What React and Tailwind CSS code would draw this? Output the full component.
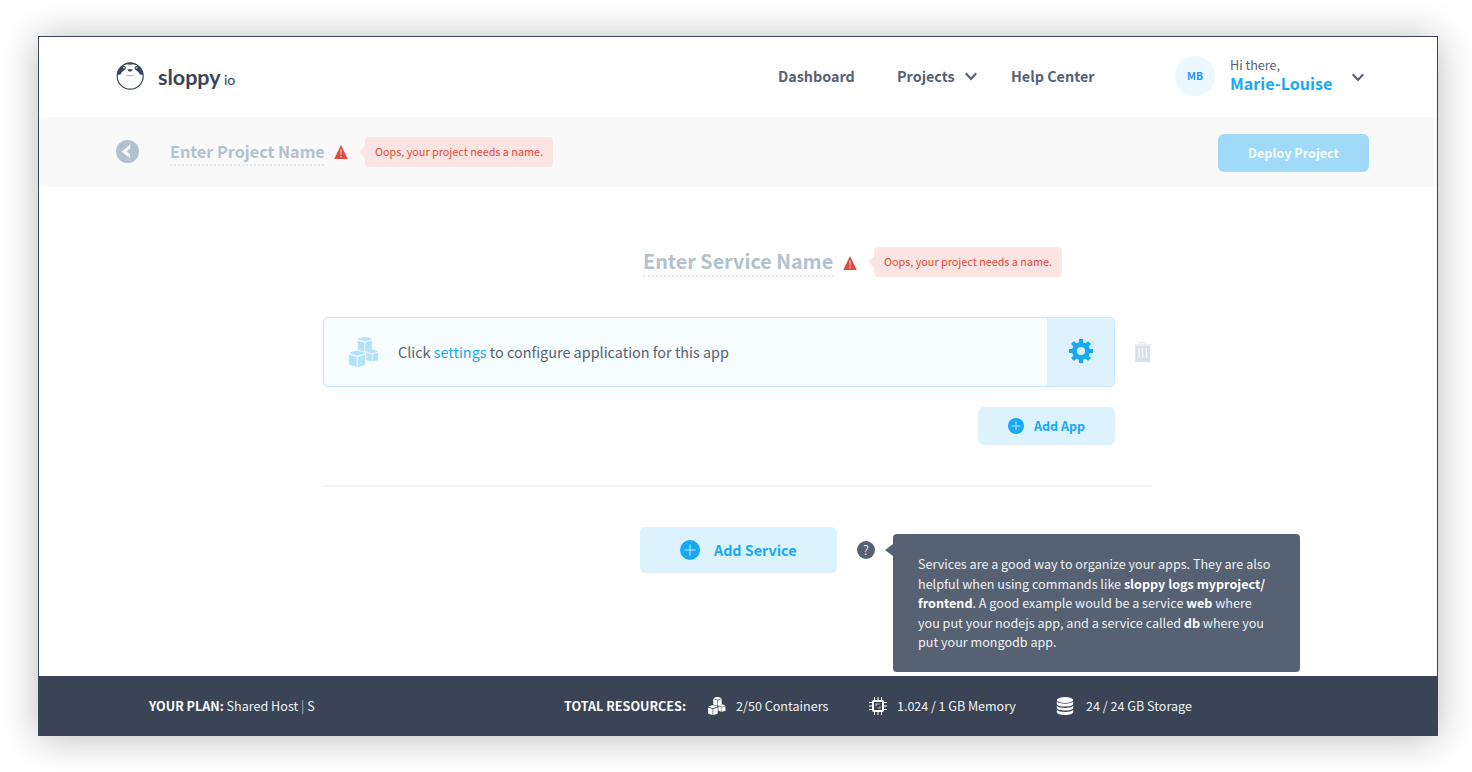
function Cube({ x, y, size, color }) {
  return (
    <g transform={`translate(${x} ${y}) scale(${size / 20})`} fill={color}>
      <path d="M10 0C12 0 16.5 1.2 18.8 2.6L19 3.4L10 6.4L1 3.4L1.2 2.6C3.5 1.2 8 0 10 0Z" />
      <path d="M.2 4.8L9.4 7.8V20L2 18C.8 17.6 .2 17 .2 16Z" />
      <path d="M19.8 4.8L10.6 7.8V20L18 18C19.2 17.6 19.8 17 19.8 16Z" />
    </g>
  );
}

function Cubes({ className, color }) {
  return (
    <svg className={className} viewBox="0 0 30 30">
      <Cube x={8.6} y={0} size={14.4} color={color} />
      <Cube x={0} y={13.6} size={16.4} color={color} />
      <Cube x={17.2} y={12.6} size={12} color={color} />
    </svg>
  );
}

function SlothLogo() {
  return (
    <svg className="h-7 w-7 shrink-0" viewBox="0 0 28 28" fill="#3a4456">
      <circle cx="14.2" cy="14.2" r="13" fill="none" stroke="#3a4456" strokeWidth="1.2" />
      <path d="M8.5 1.8C11.5 .1 16.9 .1 19.9 1.8C17.6 2.9 10.8 2.9 8.5 1.8Z" />
      <path d="M6.3 4.2C8.2 3.8 9.8 4.4 9.8 6C9.8 8.6 5.4 9 4.8 12.2C3.8 13 2 13 1.2 12.6C1.4 9 3.4 5.4 6.3 4.2Z" />
      <path d="M22.1 4.2C20.2 3.8 18.6 4.4 18.6 6C18.6 8.6 23 9 23.6 12.2C24.6 13 26.4 13 27.2 12.6C27 9 25 5.4 22.1 4.2Z" />
      <circle cx="7.8" cy="5.8" r="1" fill="#b9bec6" />
      <circle cx="20.6" cy="5.8" r="1" fill="#b9bec6" />
      <path d="M11.4 7.2H16.6C16.4 8.4 15 9.6 14 9.6C13 9.6 11.6 8.4 11.4 7.2Z" />
      <path d="M7.8 12.8C11 14 17 14 20.6 12.8C17.4 14.7 10.8 14.7 7.8 12.8Z" />
    </svg>
  );
}

function Chevron({ className }) {
  return (
    <svg className={className} viewBox="0 0 12 9" fill="none" stroke="#566173" strokeWidth="2.1">
      <path d="M.8 1.2L6 7L11.2 1.2" />
    </svg>
  );
}

function Warning({ className }) {
  return (
    <svg className={className} viewBox="0 0 14 14">
      <path d="M7 0L13.8 14H.2Z" fill="#e24c40" />
      <path d="M6.5 4.6H7.5L7.3 9.8H6.7Z" fill="#fff" />
      <circle cx="7" cy="11.5" r=".65" fill="#fff" />
    </svg>
  );
}

function ErrorBubble() {
  return (
    <div className="flex items-center">
      <svg className="h-[12px] w-[6px] shrink-0" viewBox="0 0 6 12">
        <path d="M6 0V12L0 6Z" fill="#fbe4e2" />
      </svg>
      <div className="flex h-[30px] w-[188px] items-center rounded bg-[#fbe4e2] pb-0.5 pl-[10px] text-[10.8px] text-[#e24c40]">
        <span className="whitespace-nowrap">Oops, your project needs a name.</span>
      </div>
    </div>
  );
}

function Plus({ className }) {
  return (
    <svg className={className} viewBox="0 0 20 20">
      <circle cx="10" cy="10" r="10" fill="#17a9f7" />
      <path d="M10 4.3V15.7M4.3 10H15.7" stroke="#c4eafd" strokeWidth="1.1" />
    </svg>
  );
}

function Gear() {
  return (
    <svg className="h-6 w-6" viewBox="0 0 24 24" fill="#17a9f7">
      {[0, 45, 90, 135].map((a) => (
        <rect key={a} x="9.9" y="0" width="4.2" height="24" rx=".6" transform={`rotate(${a} 12 12)`} />
      ))}
      <circle cx="12" cy="12" r="9" />
      <circle cx="12" cy="12" r="4.1" fill="#def2fe" />
    </svg>
  );
}

function Trash() {
  return (
    <svg className="h-5 w-[18px]" viewBox="0 0 18 20">
      <path d="M5.5 2V.6H12V2" fill="none" stroke="#dce8ee" strokeWidth="1" />
      <path d="M0 2H18L17 3.4H1Z" fill="#e6eef3" />
      <path d="M1.2 3.6H16.2V20H1.2Z" fill="#d5e2e9" />
      <path d="M5 6V16M8.7 6V16M12.4 6V16" stroke="#fff" strokeWidth="1" />
    </svg>
  );
}

function Chip() {
  return (
    <svg className="h-[18px] w-[18px] shrink-0" viewBox="0 0 18 18">
      <path
        d="M5.5 0V18M9 0V18M12.5 0V18M0 5.5H18M0 9H18M0 12.5H18"
        stroke="#fff"
        strokeWidth="1"
      />
      <rect x="4" y="4" width="10" height="10" rx="1" fill="#3a4456" stroke="#fff" strokeWidth="2" />
      <path d="M7 9V7H10.6M8.8 11H11V9.6" fill="none" stroke="#aeb4bd" strokeWidth="1.2" />
    </svg>
  );
}

function Storage() {
  return (
    <svg className="h-[18px] w-[18px] shrink-0" viewBox="0 0 18 18" fill="#fff">
      <ellipse cx="9" cy="3" rx="8.2" ry="3" />
      <path d="M.8 4.6C2.6 7.4 15.4 7.4 17.2 4.6V7C17.2 10.4 .8 10.4 .8 7Z" />
      <path d="M.8 8.7C2.6 11.6 15.4 11.6 17.2 8.7V11.1C17.2 14.4 .8 14.4 .8 11.1Z" />
      <path d="M.8 12.8C2.6 15.7 15.4 15.7 17.2 12.8V15C17.2 19 .8 19 .8 15Z" />
    </svg>
  );
}

export default function App() {
  return (
    <div className="h-[772px] w-[1472px] overflow-hidden bg-white px-[38px] pt-9 font-['Noto_Sans_CJK_SC','Noto_Sans',sans-serif] text-[#566173]">
      <div className="flex h-[700px] w-[1400px] flex-col border border-b-0 border-[#3a4456] bg-white shadow-[0_2px_36px_rgba(0,0,0,0.27)]">
        <header className="flex h-20 shrink-0 items-center pb-0.5 pl-[77px]">
          <SlothLogo />
          <div className="ml-3.5 flex w-[620px] items-baseline pt-0.5 text-[#3a4456]">
            <span className="w-[66px] font-['Lato',sans-serif] text-[21.5px] leading-6 font-bold">sloppy</span>
            <span className="font-['Lato',sans-serif] text-[14px] leading-4">io</span>
          </div>
          <nav className="flex items-center text-[14.35px] leading-5 font-bold whitespace-nowrap">
            <span className="w-[119px]">Dashboard</span>
            <span className="w-[68px]">Projects</span>
            <Chevron className="h-[9px] w-3" />
            <span className="ml-[34px] w-[164px]">Help Center</span>
          </nav>
          <div className="flex h-10 w-10 items-center justify-center rounded-full bg-[#ebf8ff] text-[10.5px] font-bold text-[#1e96f0]">
            MB
          </div>
          <div className="ml-[15px] w-[122px] pb-[5px] whitespace-nowrap">
            <div className="text-[12.6px] leading-[19px]">Hi there,</div>
            <div className="text-[16.1px] leading-[19px] font-bold text-[#17a9f7]">Marie-Louise</div>
          </div>
          <Chevron className="mt-0.5 h-[9px] w-3" />
        </header>

        <section className="flex h-[70px] shrink-0 items-center bg-[#f9f9f9] pl-[77px]">
          <svg className="mb-0.5 h-[23px] w-[23px] shrink-0" viewBox="0 0 23 23">
            <circle cx="11.5" cy="11.5" r="11.5" fill="#b3c1ce" />
            <path d="M14.2 4.6V8.6L10.6 11.5L14.2 14.6V18.6L5.6 11.5Z" fill="#f9f9f9" />
          </svg>
          <div className="mt-px ml-[31px] h-[27px] w-[154px] border-b-2 border-dotted border-[#e1eaef] text-[16.2px] leading-6 font-bold whitespace-nowrap text-[#b3c1ce]">
            Enter Project Name
          </div>
          <Warning className="ml-[10.4px] h-3.5 w-3.5" />
          <div className="ml-[10.6px] w-[859px]">
            <ErrorBubble />
          </div>
          <button className="mt-0.5 flex h-[38px] w-[151px] items-center justify-center rounded-md bg-[#a0daf8] text-[12.6px] font-bold text-[#f4fbff]">
            Deploy Project
          </button>
        </section>

        <main className="relative flex grow flex-col pl-[283px]">
          <div className="mt-[60px] ml-[321px] flex h-[30px] items-center">
            <div className="h-[30px] w-[191px] border-b-2 border-dotted border-[#e1eaef] text-[19.75px] leading-[27px] font-bold whitespace-nowrap text-[#b3c1ce]">
              Enter Service Name
            </div>
            <Warning className="mt-0.5 ml-[9.4px] h-3.5 w-3.5" />
            <div className="ml-[10.6px]">
              <ErrorBubble />
            </div>
          </div>

          <div className="mt-10 ml-px flex items-center">
            <div className="flex h-[70px] w-[792px] overflow-hidden rounded-[5px] border border-[#c3e9fb] bg-[#f7fcff]">
              <div className="flex grow items-center pl-[25px]">
                <Cubes className="h-[30px] w-[30px]" color="#b4e2fb" />
                <p className="ml-[19px] text-[14.42px] whitespace-nowrap">
                  Click <a className="text-[#17a9f7]">settings</a> to configure application for this app
                </p>
              </div>
              <button className="flex w-[67px] items-center justify-center bg-[#def2fe] pb-0.5">
                <Gear />
              </button>
            </div>
            <button className="ml-[19px]">
              <Trash />
            </button>
          </div>

          <button className="mt-5 ml-[656px] flex h-[38px] w-[137px] items-center rounded-md bg-[#dcf2fd] pl-[30px] text-[12.5px] font-bold text-[#17a9f7]">
            <Plus className="mr-[10px] h-4 w-4" />
            <span className="whitespace-nowrap">Add App</span>
          </button>

          <div className="mt-10 h-0.5 w-[830px] bg-[#f1f4f8]" />

          <div className="mt-10 ml-[318px] flex items-center">
            <button className="flex h-[46px] w-[197px] items-center rounded-md bg-[#dcf2fd] pl-10 text-[14.3px] font-bold text-[#17a9f7]">
              <Plus className="mr-3.5 h-5 w-5" />
              <span className="whitespace-nowrap">Add Service</span>
            </button>
            <div className="ml-5 flex h-[18px] w-[18px] items-center justify-center rounded-full bg-[#566173] text-[13px] leading-[18px] font-light text-white">
              ?
            </div>
          </div>

          <div className="absolute top-[347px] left-[846px] flex">
            <svg className="mt-2.5 h-[12px] w-[8px]" viewBox="0 0 8 12">
              <path d="M8 0V12L0 6Z" fill="#566173" />
            </svg>
            <div className="h-[138px] w-[407px] rounded bg-[#566173] pt-5 pl-[25px] text-[12.6px] leading-[19.5px] whitespace-nowrap text-[#eff1f3]">
              Services are a good way to organize your apps. They are also
              <br />
              helpful when using commands like <b className="text-white">sloppy logs myproject/</b>
              <br />
              <b className="text-white">frontend</b>. A good example would be a service <b className="text-white">web</b> where
              <br />
              you put your nodejs app, and a service called <b className="text-white">db</b> where you
              <br />
              put your mongodb app.
            </div>
          </div>
        </main>

        <footer className="flex h-[60px] shrink-0 items-center bg-[#3a4456] pl-[110px] text-[12.58px] whitespace-nowrap text-[#eff1f3]">
          <div className="w-[415px]">
            <b className="text-white">YOUR PLAN:</b> Shared Host <span className="text-[#a5abb5]">|</span> S
          </div>
          <b className="w-[144px] text-white">TOTAL RESOURCES:</b>
          <Cubes className="h-[18px] w-[18px] shrink-0" color="#ffffff" />
          <span className="ml-[10px] w-[133px]">2/50 Containers</span>
          <Chip />
          <span className="ml-[10px] w-[159px] tracking-[-0.05px]">1.024 / 1 GB Memory</span>
          <Storage />
          <span className="ml-3">24 / 24 GB Storage</span>
        </footer>
      </div>
    </div>
  );
}
